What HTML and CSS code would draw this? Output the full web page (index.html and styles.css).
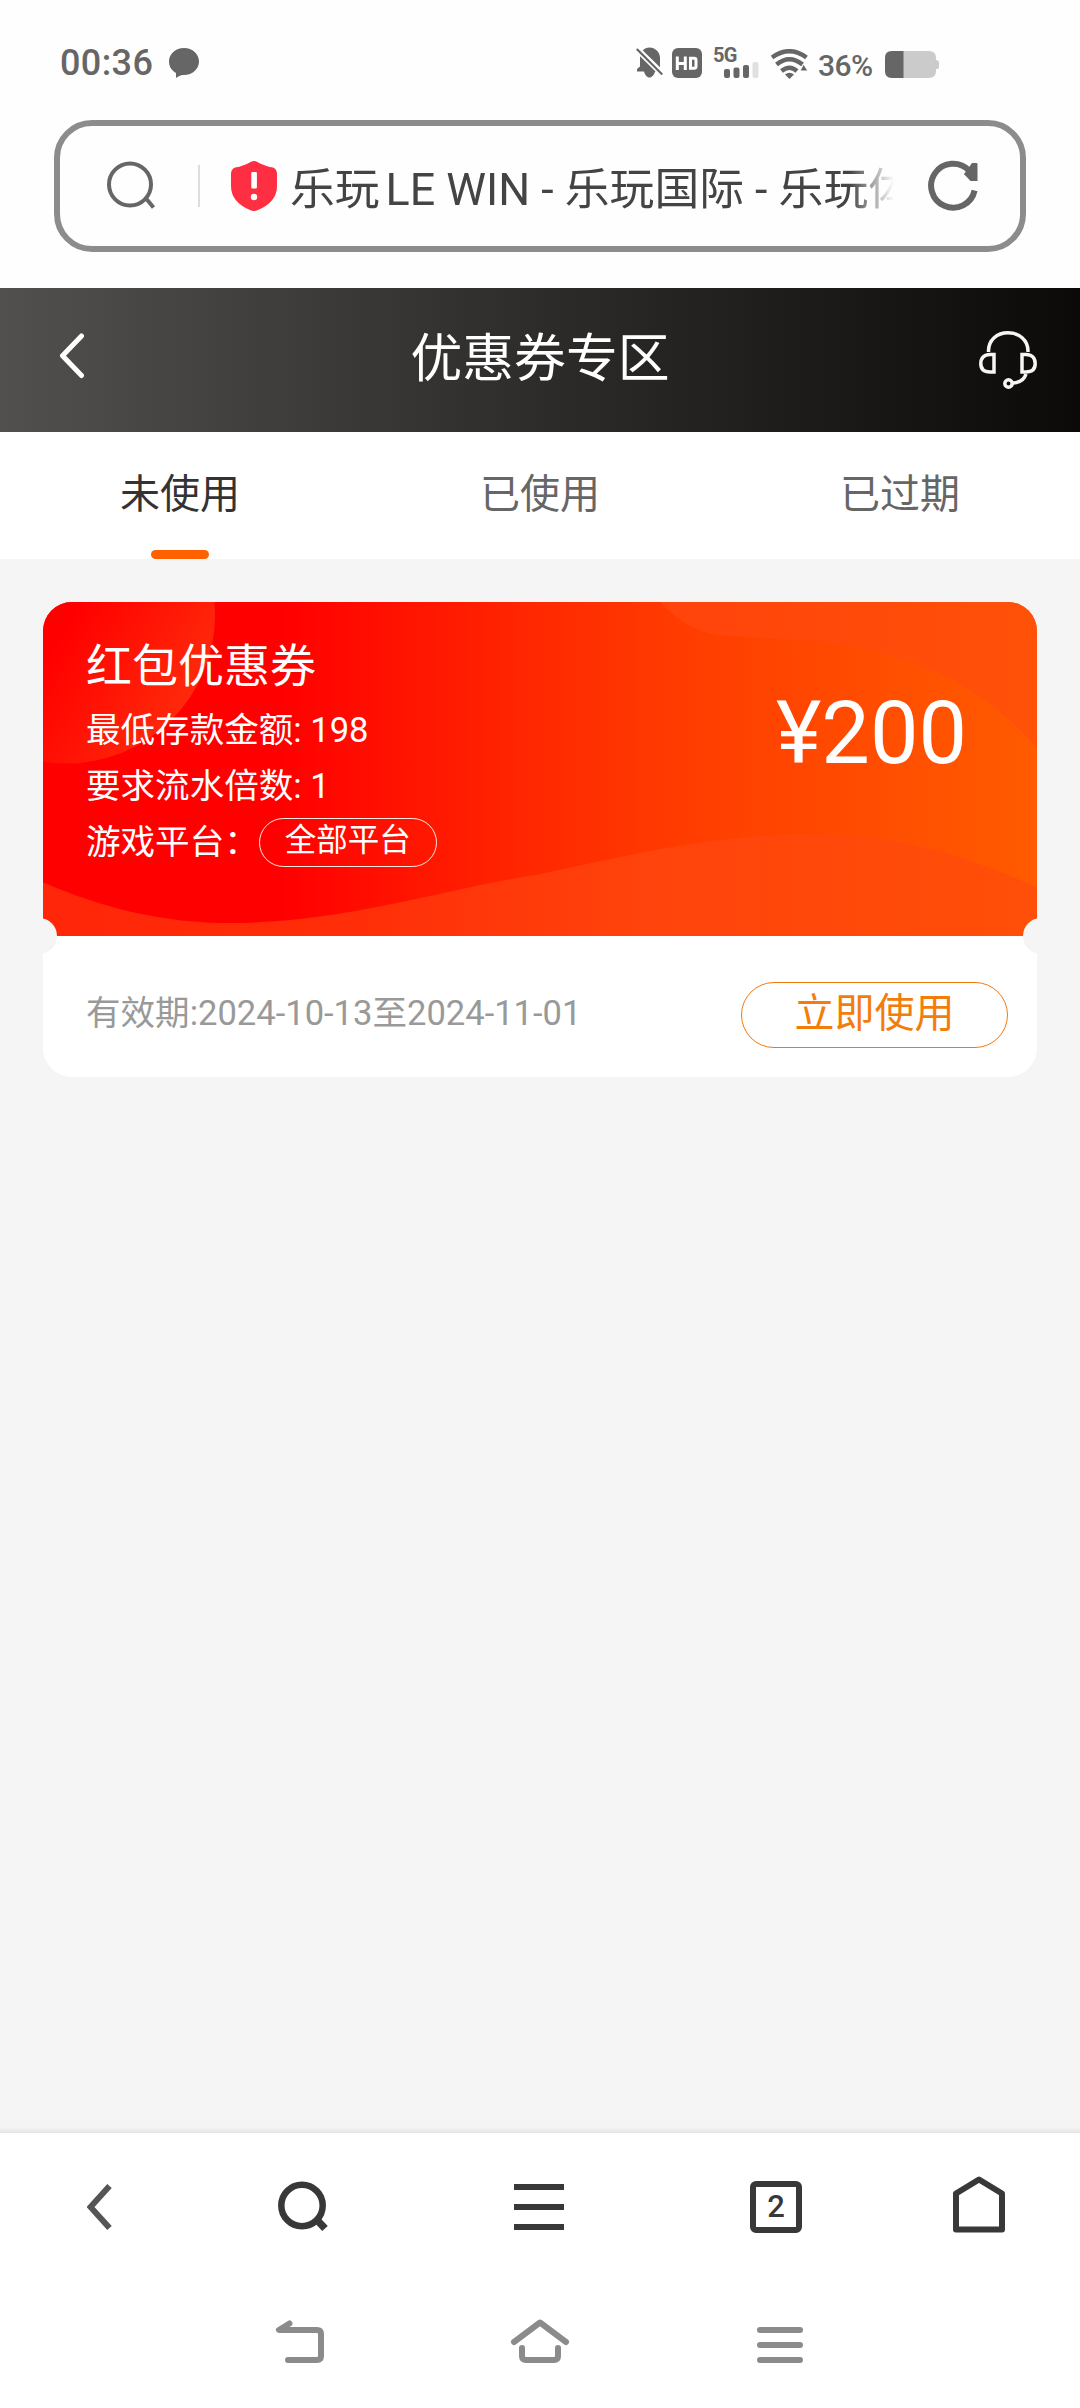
FILE: index.html
```html
<!DOCTYPE html>
<html lang="zh-CN">
<head>
<meta charset="utf-8">
<title>优惠券专区</title>
<link rel="stylesheet" href="styles.css">
</head>
<body>
<div class="phone">
  <div class="status">
    <span class="time">00:36</span>
    <svg class="bubble" width="30" height="30" viewBox="0 0 30 30"><path d="M15 0C23.500 0 30 6 30 13.500S23.500 27 15 27C13.500 27 10 27.500 7 30V25C2.500 22.500 0 18.500 0 13.500C0 6 6.500 0 15 0Z" fill="#666"/></svg>
    <div class="status-right">
      <svg width="27" height="31" viewBox="0 0 27 31"><path d="M2.500 24.500H1V22L4 19.500V10C4 5 8 .5 13.500 .5S24 5 24 11V21L25 24.500H19C18 28 16 30.500 13.500 30.500S9 28 8 24.500Z" fill="#666"/><path d="M1 2L27 27.500" stroke="#fff" stroke-width="6"/><path d="M.8 2L26.300 27.500" stroke="#666" stroke-width="2.200"/></svg>
      <svg class="hd" width="30" height="30" viewBox="0 0 30 30"><rect width="30" height="30" rx="6" fill="#666"/><path d="M5.300 8.500V22M13.300 8.500V22M5.300 15.500H13.300M18.500 10.200H22C23.500 10.200 24 10.700 24 12V18.500C24 19.800 23.500 20.300 22 20.300H18.500Z" fill="none" stroke="#fff" stroke-width="3"/></svg>
      <div class="signal">
        <span class="net">5G</span>
        <svg class="bars" width="35" height="16" viewBox="0 0 35 16"><g fill="#666"><rect y="7" width="6" height="9" rx="2"/><rect x="9.500" y="5.500" width="6" height="10.500" rx="2"/><rect x="19" y="3" width="6" height="13" rx="2"/></g><rect x="28.500" width="6" height="16" rx="2" fill="#e0e0e0"/></svg>
      </div>
      <svg class="wifi" width="37" height="30" viewBox="0 0 37 30"><g fill="none" stroke="#666" stroke-width="4.500"><path d="M1 8.500Q18.500 -4 35.500 8.500"/><path d="M5.500 15.500Q18.500 5 31.500 15.500"/><path d="M10.500 22Q18.500 15.500 26 22"/></g><path d="M14 25.500Q18.500 22 23 25.500L18.500 30Z" fill="#666"/><path d="M32.500 15L37 22H29Z" fill="#666" stroke="#fff" stroke-width="1"/></svg>
      <span class="pct">36%</span>
      <svg class="battery" width="54" height="27" viewBox="0 0 54 27"><path d="M7 0H44Q51 0 51 7V9Q54 9 54 12V16Q54 18 51 18V20Q51 27 44 27H7Q0 27 0 20V7Q0 0 7 0Z" fill="#cbcbcb"/><path d="M18.500 0H7Q0 0 0 7V20Q0 27 7 27H18.500Z" fill="#666"/></svg>
    </div>
  </div>

  <div class="address">
    <svg class="lens" width="50" height="50" viewBox="0 0 50 50"><g fill="none" stroke="#666" stroke-width="4"><circle cx="23" cy="23.500" r="21"/><path d="M39.500 38L46.500 46.500"/></g></svg>
    <span class="divider"></span>
    <svg class="shield" width="46" height="50" viewBox="0 0 46 50"><path d="M20 .7Q23 -.5 26 .7Q33 5 42 6.500Q46 8 46 13V25Q46 41 27 49Q23 50.800 19 49Q0 41 0 25V13Q0 8 4 6.500Q13 5 20 .7Z" fill="#fe2f43"/><rect x="20.300" y="11" width="5.600" height="16.500" rx="1" fill="#fff"/><circle cx="23" cy="36" r="3.200" fill="#fff"/></svg>
    <div class="url"><span class="brand">乐玩</span>LE WIN - 乐玩国际 - 乐玩体</div>
    <svg class="reload" width="52" height="52" viewBox="0 0 52 52"><path d="M46.600 30.500A22 22 0 1 1 41 10.500" fill="none" stroke="#666" stroke-width="6"/><path d="M49.500 4Q49.500 3 48.500 3H44L31 21H49.500Z" fill="#666"/><path d="M28 21L34 12L42.500 21Z" fill="#fff"/></svg>
  </div>

  <header class="header">
    <svg width="25" height="46" viewBox="0 0 25 46"><path d="M22.500 3L3.500 22.700L22.500 42.500" fill="none" stroke="#fff" stroke-width="5" stroke-linecap="round" stroke-linejoin="round"/></svg>
    <h1>优惠券专区</h1>
    <svg class="headset" width="58" height="58" viewBox="0 0 58 58"><g fill="none" stroke="#f5f5f5" stroke-width="3.500"><path d="M9.500 21V20C9.500 9 18 1.800 29 1.800S49 9 49 20V21"/><path d="M15 23.500H11C5 23.500 1.800 27 1.800 32.500S5 41 11 41H15Z"/><path d="M43 23.500H47C53 23.500 56.200 27 56.200 32.500S53 41 47 41H43Z"/><circle cx="29.500" cy="52.500" r="3.700"/><path d="M33.500 52Q44.500 51.500 47 43"/></g></svg>
  </header>

  <nav class="tabs">
    <div class="tab active">未使用</div>
    <div class="tab">已使用</div>
    <div class="tab">已过期</div>
  </nav>

  <main class="content">
    <article class="coupon">
      <section class="coupon-top">
        <svg class="waves" width="994" height="334" viewBox="0 0 994 335" preserveAspectRatio="none">
          <defs>
            <linearGradient id="base"><stop offset=".24" stop-color="#f00"/><stop offset=".5" stop-color="#ff2900"/><stop offset=".65" stop-color="#ff3d00"/><stop offset="1" stop-color="#ff5b00"/></linearGradient>
            <linearGradient id="disc" gradientUnits="userSpaceOnUse" x1="20" y1="30" x2="140" y2="100"><stop offset="0" stop-color="#f00"/><stop offset="1" stop-color="#ff280a"/></linearGradient>
            <linearGradient id="low"><stop offset="0" stop-color="#ff2609"/><stop offset=".3" stop-color="#ff2d08"/><stop offset=".6" stop-color="#ff430c"/><stop offset="1" stop-color="#ff4f08"/></linearGradient>
            <linearGradient id="high"><stop offset="0" stop-color="#ff430c"/><stop offset="1" stop-color="#ff5108"/></linearGradient>
          </defs>
          <rect width="994" height="335" fill="url(#base)"/>
          <circle cx="23" cy="13" r="149" fill="url(#disc)"/>
          <path d="M0 281C60 307 120 322 188 322C300 322 400 288 497 273C590 253 670 233 772 233C860 233 925 256 994 286V335H0Z" fill="url(#low)"/>
          <path d="M617 0C632 15 650 33 690 34C735 38 780 38 820 47C890 61 945 92 994 146V0Z" fill="url(#high)"/>
        </svg>
        <div class="info">
          <h2>红包优惠券</h2>
          <p>最低存款金额: 198</p>
          <p>要求流水倍数: 1</p>
          <p>游戏平台：<span class="platform">全部平台</span></p>
        </div>
        <div class="amount">¥200</div>
      </section>
      <section class="coupon-bottom">
        <span class="valid">有效期:2024-10-13至2024-11-01</span>
        <span class="use">立即使用</span>
      </section>
    </article>
  </main>

  <footer class="toolbar">
    <svg width="25" height="50" viewBox="0 0 25 50"><path d="M22.500 4L3.500 25L22.500 46" fill="none" stroke="#555" stroke-width="6"/></svg>
    <svg width="50" height="52" viewBox="0 0 50 52"><circle cx="24" cy="24.500" r="20.700" fill="none" stroke="#383838" stroke-width="6.500"/><path d="M39 39L47 47.500" stroke="#383838" stroke-width="7.500"/></svg>
    <svg width="50" height="46" viewBox="0 0 50 46"><path d="M0 3H50M0 23H50M0 43H50" stroke="#383838" stroke-width="6"/></svg>
    <span class="count">2</span>
    <svg class="house" width="52" height="57" viewBox="0 0 52 57"><path d="M3 17.500L26 3.500L49 17.500V53.500H3Z" fill="none" stroke="#383838" stroke-width="6" stroke-linejoin="round"/></svg>
  </footer>
  <div class="sysnav">
    <svg width="52" height="46" viewBox="0 0 52 46"><path d="M15.500 4.500L5 11H43Q47 11 47 15V37Q47 41 43 41H14" fill="none" stroke="#8b8b8b" stroke-width="6" stroke-linecap="round" stroke-linejoin="round"/></svg>
    <svg width="60" height="46" viewBox="0 0 60 46"><path d="M4 23L30 3.500L56 23M12 29V37Q12 41 16 41H44Q48 41 48 37V29" fill="none" stroke="#8b8b8b" stroke-width="6" stroke-linecap="round" stroke-linejoin="round"/></svg>
    <svg width="52" height="46" viewBox="0 0 52 46"><path d="M6 11H46M6 26H46M6 41H46" stroke="#8b8b8b" stroke-width="6" stroke-linecap="round"/></svg>
  </div>
</div>
</body>
</html>
```
FILE: styles.css
```css
* { box-sizing: border-box; }
body { margin: 0; background: #fff; font-family: Roboto, "Noto Sans CJK SC", sans-serif; }
svg { display: block; flex: none; }
h1, h2, p { margin: 0; font-weight: 400; }
.phone { width: 1080px; height: 2408px; display: flex; flex-direction: column; background: #fefefe; overflow: hidden; }

.status { height: 120px; padding: 42px 141px 0 60px; display: flex; align-items: flex-start; color: #666; font-weight: 500; }
.time { font-size: 36px; line-height: 42px; letter-spacing: .4px; }
.bubble { margin: 6px 0 0 16px; }
.status-right { margin-left: auto; padding-top: 5px; display: flex; align-items: flex-start; }
.hd { margin: 1px 0 0 9px; }
.signal { width: 47px; height: 31px; margin-left: 11px; display: flex; flex-direction: column; align-items: flex-end; }
.net { align-self: flex-start; height: 15px; font-size: 20px; line-height: 17px; font-weight: 700; letter-spacing: -.8px; }
.bars { margin-right: 1px; }
.wifi { margin: 2px 0 0 11px; }
.pct { width: 55px; margin: 2px 0 0 10px; font-size: 30px; line-height: 34px; white-space: nowrap; letter-spacing: -.6px; }
.battery { margin: 4px 0 0 12px; }

.address { width: 972px; height: 132px; margin-left: 54px; padding: 0 38px 0 47px; border: 6px solid #8c8c8c; border-radius: 38px; display: flex; align-items: center; flex: none; }
.divider { width: 2px; height: 42px; margin-left: 41px; background: #ddd; }
.shield { margin-left: 31px; }
.url { width: 604px; margin: 7px 0 0 13px; font-size: 44.800px; line-height: 60px; color: #444; white-space: nowrap; overflow: hidden; -webkit-mask-image: linear-gradient(90deg, #000 560px, transparent 604px); mask-image: linear-gradient(90deg, #000 560px, transparent 604px); }
.brand { margin-right: 6px; }
.reload { margin-left: 34px; }

.header { height: 144px; margin-top: 36px; padding: 0 43px 0 59px; display: grid; grid-template-columns: 42px 1fr 58px; align-items: center; flex: none; color: #fff; background: linear-gradient(90deg, #52504f, #2d2c2a 50%, #0b0a08); }
.header > svg:first-child { margin-top: -8px; }
.header h1 { font-size: 51.840px; line-height: 70px; text-align: center; padding: 0; }

.tabs { height: 127px; display: grid; grid-template-columns: repeat(3, 1fr); background: #fff; flex: none; }
.tab { display: flex; flex-direction: column; align-items: center; justify-content: space-between; padding-top: 33px; font-size: 40px; line-height: 60px; color: #666; }
.active { color: #333; }
.active::after { content: ""; width: 58px; height: 9px; border-radius: 5px; background: #ff6000; }

.content { flex: 1; padding: 43px 43px 0; background: linear-gradient(#f5f5f5 calc(100% - 6px), #e4e4e4); }
.coupon { height: 475px; border-radius: 29px; overflow: hidden; position: relative; background: #fff; }
.coupon::before, .coupon::after { content: ""; position: absolute; z-index: 1; top: 316px; width: 36px; height: 36px; border-radius: 50%; background: #f5f5f5; }
.coupon::before { left: -22px; }
.coupon::after { right: -22px; }
.coupon-top { height: 334px; position: relative; display: flex; justify-content: space-between; padding: 0 70px 0 43px; color: #fff; }
.waves { position: absolute; left: 0; top: 0; }
.info { position: relative; padding-top: 34px; }
.info h2 { font-size: 46px; line-height: 60px; margin-bottom: 6px; }
.info p { font-size: 34.560px; line-height: 56px; height: 56px; display: flex; align-items: center; }
.platform { width: 178px; height: 49px; border: 1.500px solid #ffe9e3; border-radius: 25px; font-size: 31.500px; line-height: 44px; text-align: center; margin-top: 1px; }
.amount { position: relative; font-size: 86.400px; line-height: 100px; margin-top: 82px; }
.coupon-bottom { height: 141px; padding: 3px 29px 0 43px; display: flex; align-items: center; justify-content: space-between; }
.valid { font-size: 34.560px; color: #999; margin-top: 4px; }
.use { width: 267px; height: 66px; margin-top: 13px; border: 1px solid #ef7a10; border-radius: 33px; font-size: 40px; line-height: 62px; text-align: center; color: #f37d0b; }

.toolbar { height: 148px; display: grid; grid-template-columns: 198px 210px 262px 212px 194px; justify-items: center; align-items: center; flex: none; background: #fff; }
.count { width: 52px; height: 52px; border: 6px solid #383838; border-radius: 6px; font-size: 31px; font-weight: 500; line-height: 40px; text-align: center; color: #383838; }
.house { margin-top: -5px; }
.sysnav { height: 127px; padding: 38px 180px 0; display: grid; grid-template-columns: repeat(3, 1fr); justify-items: center; background: #fff; flex: none; }
```
